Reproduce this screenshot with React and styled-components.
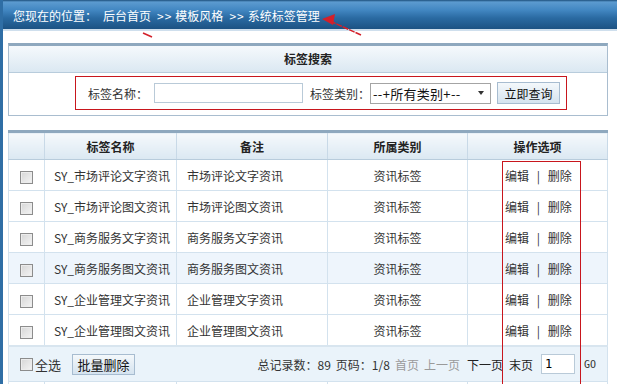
import React from 'react'
import styled, { createGlobalStyle } from 'styled-components'

const GlobalStyle = createGlobalStyle`
  html, body {
    margin: 0;
    padding: 0;
    overflow: hidden;
    background: #fff;
  }
  body {
    font-family: "Noto Sans CJK SC", "DejaVu Sans", sans-serif;
    font-size: 12px;
    color: #222;
  }
`

const rows = [
  { name: 'SY_市场评论文字资讯', note: '市场评论文字资讯' },
  { name: 'SY_市场评论图文资讯', note: '市场评论图文资讯' },
  { name: 'SY_商务服务文字资讯', note: '商务服务文字资讯' },
  { name: 'SY_商务服务图文资讯', note: '商务服务图文资讯', hover: true },
  { name: 'SY_企业管理文字资讯', note: '企业管理文字资讯' },
  { name: 'SY_企业管理图文资讯', note: '企业管理图文资讯' },
]

const App = () => {
  return (
    <>
      <GlobalStyle />
      <Page>
        <Crumbs>
          <span>您现在的位置：</span>
          <CrumbLink>后台首页</CrumbLink>
          <Sep>&gt;&gt;</Sep>
          <span>模板风格</span>
          <Sep>&gt;&gt;</Sep>
          <span>系统标签管理</span>
        </Crumbs>

        <Content>
          <Panel>
            <PanelHead>标签搜索</PanelHead>
            <PanelBody>
              <SearchBox>
                <Label gap={6}>标签名称：</Label>
                <TextInput width={149} />
                <Label>标签类别：</Label>
                <SelectBox>
                  <span>--+所有类别+--</span>
                  <Caret />
                </SelectBox>
                <Button width={63}>立即查询</Button>
              </SearchBox>
            </PanelBody>
          </Panel>

          <TableWrap>
            <Table>
              <colgroup>
                <col style={{ width: 36 }} />
                <col style={{ width: 132 }} />
                <col style={{ width: 151 }} />
                <col style={{ width: 140 }} />
                <col />
              </colgroup>
              <thead>
                <tr>
                  <Th></Th>
                  <Th>标签名称</Th>
                  <Th>备注</Th>
                  <Th>所属类别</Th>
                  <Th>操作选项</Th>
                </tr>
              </thead>
              <tbody>
                {rows.map(r => (
                  <Row key={r.name} hover={r.hover}>
                    <Td align="center"><Check /></Td>
                    <Td pad={9}>{r.name}</Td>
                    <Td pad={10}>{r.note}</Td>
                    <Td align="center">资讯标签</Td>
                    <Td pad={37}>编辑 <Bar>|</Bar> 删除</Td>
                  </Row>
                ))}
                <tr>
                  <FootCell colSpan={5}>
                    <FootBar>
                      <FootLeft>
                        <Check />
                        <span>全选</span>
                        <Button width={63} big>批量删除</Button>
                      </FootLeft>
                      <Pager>
                        <span>总记录数：89</span>
                        <span>页码：1/8</span>
                        <PageLink off>首页</PageLink>
                        <PageLink off>上一页</PageLink>
                        <PageLink shift={2}>下一页</PageLink>
                        <PageLink shift={1}>末页</PageLink>
                        <PageInput defaultValue="1" />
                        <Go>GO</Go>
                      </Pager>
                    </FootBar>
                  </FootCell>
                </tr>
                <tr>
                  <Td /><Td /><Td /><Td /><Td />
                </tr>
              </tbody>
            </Table>
            <OpsMark />
          </TableWrap>
        </Content>

        <Annot width="617" height="60" viewBox="0 0 617 60">
          <line x1="143" y1="33" x2="152" y2="37" stroke="#d3202a" strokeWidth="1.5" />
          <line x1="330" y1="21" x2="361" y2="35" stroke="#d3202a" strokeWidth="1.5" strokeDasharray="6 1" />
          <polygon points="322,19 335,14 333,25" fill="#d3202a" />
        </Annot>
      </Page>
    </>
  )
}

export default App

const Page = styled.div`
  position: relative;
  height: 384px;
  border-left: 3px solid #2f6ea5;
  box-sizing: border-box;
  overflow: hidden;
`

const Crumbs = styled.div`
  height: 29px;
  line-height: 31px;
  padding-left: 10px;
  color: #fff;
  font-size: 12px;
  background: linear-gradient(#1d4f7c 0px, #5c9bd0 2px, #4287c2 10px, #2a6aa2 18px, #1c5283 29px);
  border-bottom: 2px solid #cfdfed;
  display: flex;
`

const CrumbLink = styled.span`
  margin-left: 6px;
`

const Sep = styled.span`
  margin: 0 3px 0 6px;
  letter-spacing: 1px;
`

const Content = styled.div`
  padding: 12px 9px 0 5px;
`

const Panel = styled.div`
  border: 1px solid #a9bdcf;
  border-top: 3px solid #8ea8be;
`

const PanelHead = styled.div`
  height: 26px;
  line-height: 26px;
  text-align: center;
  font-weight: bold;
  background: linear-gradient(#f5f9fc, #dbe8f2);
  border-bottom: 1px solid #b8ccdc;
`

const PanelBody = styled.div`
  height: 42px;
  padding: 3px 0 0 66px;
  box-sizing: border-box;
`

const SearchBox = styled.div`
  width: 492px;
  height: 34px;
  box-sizing: border-box;
  border: 1px solid #c8161d;
  display: flex;
  align-items: center;
  padding-left: 12px;
  color: #333;
`

const Label = styled.span`
  margin-right: ${p => p.gap || 0}px;
`

const TextInput = styled.input`
  width: ${p => p.width}px;
  height: 20px;
  box-sizing: border-box;
  border: 1px solid #b9cad8;
  padding: 0 3px;
  font-size: 12px;
  margin-right: 7px;
  outline: none;
`

const PageInput = styled.input`
  width: 34px;
  height: 20px;
  box-sizing: border-box;
  border: 1px solid #b9cad8;
  padding: 0 3px;
  margin-left: 3px;
  font-family: "DejaVu Sans Mono", monospace;
  font-size: 12px;
  outline: none;
`

const SelectBox = styled.div`
  width: 121px;
  height: 21px;
  box-sizing: border-box;
  border: 1px solid #a4a4a4;
  display: flex;
  align-items: center;
  justify-content: space-between;
  padding: 0 6px 0 2px;
  margin-right: 6px;
  color: #111;
  background: #fff;
  font-size: 13px;
  letter-spacing: 0.3px;
`

const Caret = styled.span`
  width: 0;
  height: 0;
  border-left: 3px solid transparent;
  border-right: 3px solid transparent;
  border-top: 4px solid #333;
`

const Button = styled.div`
  width: ${p => p.width}px;
  height: ${p => (p.big ? 21 : 22)}px;
  box-sizing: border-box;
  border: 1px solid #a7bcd0;
  background: linear-gradient(#f4f8fb, #d5e3ef);
  display: flex;
  align-items: center;
  justify-content: center;
  color: #111;
  font-size: ${p => (p.big ? 13 : 12)}px;
`

const TableWrap = styled.div`
  position: relative;
  margin-top: 14px;
`

const Table = styled.table`
  width: 600px;
  border-collapse: collapse;
  table-layout: fixed;
  border-top: 3px solid #8ea8be;
  border-left: 1px solid #a9bdcf;
  border-right: 1px solid #a9bdcf;
`

const Th = styled.th`
  height: 26px;
  padding: 0;
  font-weight: bold;
  font-size: 12px;
  background: linear-gradient(#f5f9fc, #dbe8f2);
  border: 1px solid #c8d9e7;
  border-top: none;
  border-bottom: 1px solid #b8ccdc;
`

const Row = styled.tr`
  background: ${p => (p.hover ? '#eef5fc' : '#fff')};
`

const Td = styled.td`
  height: 30px;
  padding: 0 0 0 ${p => p.pad || 0}px;
  text-align: ${p => p.align || 'left'};
  border: 1px solid #d3e2ee;
  color: #333;
  white-space: nowrap;
`

const Bar = styled.span`
  margin: 0 5px;
`

const Check = styled.span`
  display: inline-block;
  width: 13px;
  height: 13px;
  box-sizing: border-box;
  border: 1px solid #8c8c8c;
  background: linear-gradient(135deg, #d6d6d6, #f4f4f4);
  box-shadow: inset 0 0 0 1px #ececec;
  vertical-align: middle;
`

const FootCell = styled.td`
  height: 34px;
  padding: 0;
  background: #eaf3fa;
  border: 1px solid #d3e2ee;
  border-top: 2px solid #d8e5ef;
`

const FootBar = styled.div`
  display: flex;
  align-items: center;
  justify-content: space-between;
  padding: 0 11px 0 11px;
  color: #333;
`

const FootLeft = styled.div`
  display: flex;
  align-items: center;
  gap: 2px;
  font-size: 13px;

  & > div {
    margin-left: 9px;
  }
`

const Pager = styled.div`
  display: flex;
  align-items: center;
  gap: 5px;
  font-size: 12px;
`

const PageLink = styled.span`
  color: ${p => (p.off ? '#9a9a9a' : '#222')};
  margin-left: ${p => p.shift || 0}px;
`

const Go = styled.span`
  font-family: "DejaVu Sans Mono", monospace;
  font-size: 10px;
  margin-left: 4px;
`

const OpsMark = styled.div`
  position: absolute;
  left: 494px;
  top: 31px;
  width: 77px;
  height: 300px;
  border: 1px solid #c8161d;
  pointer-events: none;
`

const Annot = styled.svg`
  position: absolute;
  left: -3px;
  top: 0;
  pointer-events: none;
`
